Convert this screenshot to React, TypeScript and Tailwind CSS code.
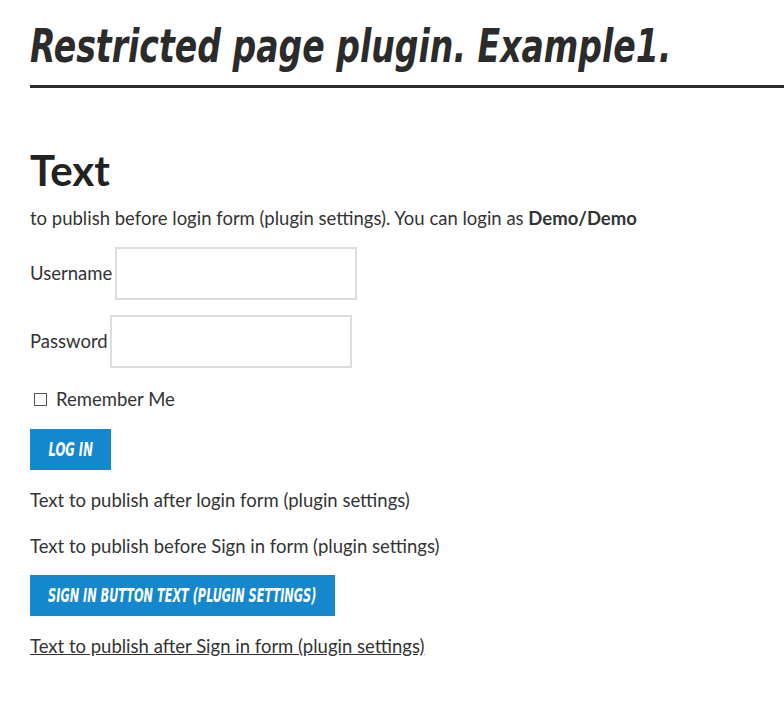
export default function App() {
  const cond = { fontFamily: '"DejaVu Sans Condensed", "DejaVu Sans", sans-serif' }
  return (
    <div className="min-h-[707px] bg-white text-[#333] font-['Lato',sans-serif] overflow-hidden">
      <div className="pl-[30px] pt-[16px]">
        <h1
          style={cond}
          className="text-[46px] leading-[60px] font-bold italic text-[#2b2b2b] whitespace-nowrap origin-left scale-x-[0.80]"
        >
          Restricted page plugin. Example1.
        </h1>
        <div className="mt-[9px] h-[3px] bg-[#2b2b2b]" />

        <h2 className="mt-[60px] text-[42px] leading-[44px] font-bold text-[#222]">Text</h2>
        <p className="mt-[14px] text-[18.5px] leading-[24px]">
          to publish before login form (plugin settings). You can login as <b>Demo/Demo</b>
        </p>

        <div className="mt-[17px] flex items-center gap-[3px] text-[18.5px]">
          <label>Username</label>
          <input className="w-[242px] h-[53px] border-2 border-[#ddd] outline-none" />
        </div>
        <div className="mt-[15px] flex items-center gap-[2px] text-[18.5px]">
          <label>Password</label>
          <input type="password" className="w-[242px] h-[53px] border-2 border-[#ddd] outline-none" />
        </div>
        <div className="mt-[18px] flex items-center gap-[9px] text-[18.5px] pl-[4px]">
          <span className="w-[13px] h-[13px] border border-[#555]" />
          <span>Remember Me</span>
        </div>

        <button
          style={cond}
          className="mt-[15px] w-[81px] h-[41px] flex items-center justify-center bg-[#1587cc] text-white text-[19px] font-bold italic uppercase"
        >
          <span className="inline-block whitespace-nowrap scale-x-[0.68]">Log in</span>
        </button>

        <p className="mt-[18px] text-[18.5px] leading-[24px]">Text to publish after login form (plugin settings)</p>
        <p className="mt-[22px] text-[18.5px] leading-[24px]">Text to publish before Sign in form (plugin settings)</p>

        <button
          style={cond}
          className="mt-[17px] w-[305px] h-[41px] flex items-center justify-center bg-[#1587cc] text-white text-[19px] font-bold italic uppercase"
        >
          <span className="inline-block whitespace-nowrap scale-x-[0.66]">Sign in button text (plugin settings)</span>
        </button>

        <p className="mt-[18px] text-[18.5px] leading-[24px]">
          <a href="#" className="underline text-[#333]">Text to publish after Sign in form (plugin settings)</a>
        </p>
      </div>
    </div>
  )
}
